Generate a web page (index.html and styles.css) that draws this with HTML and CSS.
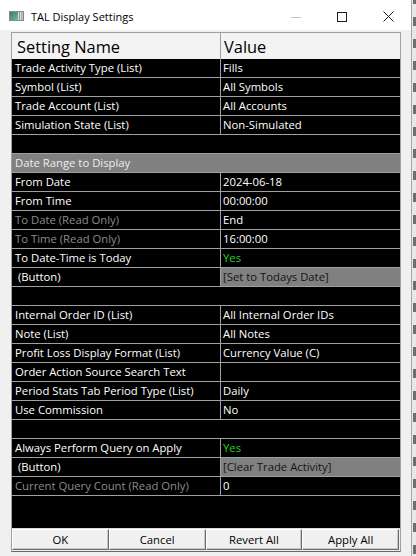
FILE: index.html
```html
<!DOCTYPE html>
<html lang="en">
<head>
<meta charset="utf-8">
<title>TAL Display Settings</title>
<link rel="stylesheet" href="styles.css">
</head>
<body>
<div class="desk">
  <div class="window">
    <div class="titlebar">
      <svg class="app-icon" width="15" height="10" viewBox="0 0 15 10">
        <defs>
          <linearGradient id="pane" x1="0" y1="0" x2="1" y2="1">
            <stop offset="0" stop-color="#2f7d6a"/>
            <stop offset="1" stop-color="#7fb9a5"/>
          </linearGradient>
        </defs>
        <rect x="0.5" y="0.5" width="14" height="9" fill="#d8d8d8" stroke="#8a8a8a"/>
        <rect x="1" y="1" width="8" height="8" fill="url(#pane)"/>
        <rect x="10" y="1" width="1" height="8" fill="#9a9a9a"/>
        <rect x="12" y="1" width="2" height="8" fill="#b8b8b8"/>
      </svg>
      <span class="title">TAL Display Settings</span>
      <div class="controls">
        <div class="ctl"><svg width="10" height="10" viewBox="0 0 10 10"><path d="M0 5.5H10" stroke="#c4c4c4" stroke-width="1"/></svg></div>
        <div class="ctl"><svg width="10" height="10" viewBox="0 0 10 10"><rect x="0.5" y="0.5" width="9" height="9" fill="none" stroke="#1a1a1a"/></svg></div>
        <div class="ctl"><svg width="11" height="11" viewBox="0 0 11 11"><path d="M0.5 0.5L10.5 10.5M10.5 0.5L0.5 10.5" stroke="#1a1a1a" stroke-width="1"/></svg></div>
      </div>
    </div>

    <div class="client">
      <div class="grid">
        <div class="head">
          <div class="hcell name">Setting Name</div>
          <div class="hcell value">Value</div>
        </div>

        <div class="row"><div class="name">Trade Activity Type (List)</div><div class="value">Fills</div></div>
        <div class="row"><div class="name">Symbol (List)</div><div class="value">All Symbols</div></div>
        <div class="row"><div class="name">Trade Account (List)</div><div class="value">All Accounts</div></div>
        <div class="row"><div class="name">Simulation State (List)</div><div class="value">Non-Simulated</div></div>
        <div class="row blank"></div>
        <div class="row section">Date Range to Display</div>
        <div class="row"><div class="name">From Date</div><div class="value">2024-06-18</div></div>
        <div class="row"><div class="name">From Time</div><div class="value">00:00:00</div></div>
        <div class="row"><div class="name ro">To Date (Read Only)</div><div class="value">End</div></div>
        <div class="row"><div class="name ro">To Time (Read Only)</div><div class="value">16:00:00</div></div>
        <div class="row"><div class="name">To Date-Time is Today</div><div class="value yes">Yes</div></div>
        <div class="row"><div class="name">&nbsp;(Button)</div><div class="value action">[Set to Todays Date]</div></div>
        <div class="row blank"></div>
        <div class="row"><div class="name">Internal Order ID (List)</div><div class="value">All Internal Order IDs</div></div>
        <div class="row"><div class="name">Note (List)</div><div class="value">All Notes</div></div>
        <div class="row"><div class="name">Profit Loss Display Format (List)</div><div class="value">Currency Value (C)</div></div>
        <div class="row"><div class="name">Order Action Source Search Text</div><div class="value"></div></div>
        <div class="row"><div class="name">Period Stats Tab Period Type (List)</div><div class="value">Daily</div></div>
        <div class="row"><div class="name">Use Commission</div><div class="value">No</div></div>
        <div class="row blank"></div>
        <div class="row"><div class="name">Always Perform Query on Apply</div><div class="value yes">Yes</div></div>
        <div class="row"><div class="name">&nbsp;(Button)</div><div class="value action">[Clear Trade Activity]</div></div>
        <div class="row"><div class="name ro">Current Query Count (Read Only)</div><div class="value">0</div></div>

        <div class="filler"></div>

        <div class="buttons">
          <button class="btn">OK</button>
          <button class="btn">Cancel</button>
          <button class="btn">Revert All</button>
          <button class="btn">Apply All</button>
        </div>
      </div>
    </div>
  </div>
  <div class="behind"></div>
</div>
</body>
</html>
```

FILE: styles.css
```css
html, body {
  margin: 0;
  padding: 0;
}

body {
  width: 416px;
  height: 556px;
  overflow: hidden;
  font-family: "Open Sans", "Noto Sans", "DejaVu Sans", sans-serif;
  font-size: 11.3px;
}

.desk {
  display: flex;
  height: 556px;
}

/* dialog window */
.window {
  width: 411px;
  height: 556px;
  display: flex;
  flex-direction: column;
  background: #f0f0f0;
  box-sizing: border-box;
}

.titlebar {
  height: 30px;
  flex: none;
  background: #ffffff;
  display: flex;
  align-items: center;
}

.app-icon {
  margin-left: 9px;
  margin-top: 2px;
}

.title {
  margin-left: 7px;
  font-size: 11px;
  color: #000;
  margin-top: 2px;
}

.controls {
  margin-left: auto;
  display: flex;
  height: 30px;
}

.ctl {
  width: 46px;
  height: 30px;
  display: flex;
  align-items: center;
  justify-content: center;
}

.ctl svg {
  display: block;
  margin-top: 3px;
}

.client {
  flex: 1;
  padding: 2px 0 4px 11px;
  display: flex;
}

/* property grid */
.grid {
  width: 388px;
  border-left: 1px solid #a0a0a0;
  border-right: 1px solid #a0a0a0;
  border-bottom: 1px solid #696969;
  display: flex;
  flex-direction: column;
  background: #000;
}

.head {
  height: 27px;
  flex: none;
  box-sizing: border-box;
  border-top: 1px solid #a0a0a0;
  background: #f3f3f3;
  display: flex;
}

.hcell {
  font-size: 16.4px;
  color: #000;
  display: flex;
  align-items: center;
  box-sizing: border-box;
}

.hcell.name {
  width: 209px;
  padding-left: 5px;
  border-right: 1px solid #a0a0a0;
}

.hcell.value {
  flex: 1;
  padding-left: 3px;
}

.row {
  height: 19px;
  flex: none;
  box-sizing: border-box;
  border-bottom: 1px solid #a0a0a0;
  display: flex;
  color: #fff;
  line-height: 18px;
}

.row .name {
  width: 209px;
  box-sizing: border-box;
  padding-left: 3px;
  border-right: 1px solid #a0a0a0;
  white-space: nowrap;
  overflow: hidden;
}

.row .value {
  flex: 1;
  padding-left: 2px;
  white-space: nowrap;
}

.row .name.ro {
  color: #8c8c8c;
}

.row .value.yes {
  color: #22d322;
}

.row .value.action {
  background: #808080;
  color: #141414;
}

.row.section {
  background: #808080;
  color: #efefef;
  padding-left: 3px;
}

.filler {
  flex: 1;
  background: #000;
}

.buttons {
  height: 22px;
  flex: none;
  display: flex;
  padding-right: 1px;
  background: #f0f0f0;
  border-top: 1px solid #dcdcdc;
}

.btn {
  flex: 1;
  margin: 0;
  padding: 0;
  height: 21px;
  box-sizing: border-box;
  font-family: inherit;
  font-size: 11.3px;
  color: #000;
  background: #f0f0f0;
  border-style: solid;
  border-width: 1px;
  border-color: #ffffff #696969 #696969 #ffffff;
  box-shadow: inset -1px -1px 0 #c8c8c8;
}

/* edge of the window underneath */
.behind {
  width: 5px;
  height: 556px;
  box-sizing: border-box;
  border-left: 1px solid #a8a8a8;
  background:
    linear-gradient(to bottom, #6e6e6e 0 9px, transparent 9px 22px) 1px 17px / 4px 22px repeat-y,
    #e8e8e8;
}
```
